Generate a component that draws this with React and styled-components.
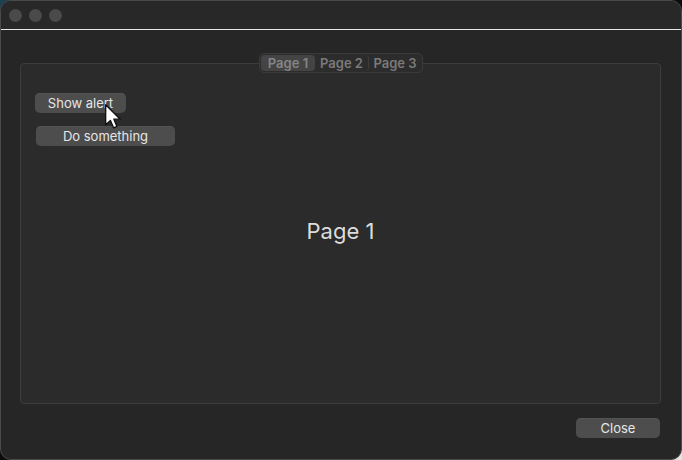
import React from "react";
import styled, { createGlobalStyle } from "styled-components";

const Global = createGlobalStyle`
  html, body { margin: 0; padding: 0; background: #101414; }
  body { font-family: Inter, "Noto Sans", sans-serif; -webkit-font-smoothing: antialiased; }
  #root { width: 682px; height: 460px; }
`;

const Desktop = styled.div`
  width: 682px;
  height: 460px;
  background: linear-gradient(135deg, #1d4250 0%, #0c0c0c 20%, #0c0c0c 80%, #e8e8e8 100%);
  overflow: hidden;
  position: relative;
`;

const Window = styled.div`
  width: 682px;
  height: 460px;
  box-sizing: border-box;
  border: 1px solid #4a4a4a;
  border-radius: 11px;
  background: #262626;
  display: flex;
  flex-direction: column;
  overflow: hidden;
`;

const TitleBar = styled.div`
  height: 28px;
  flex: none;
  background: #282828;
  border-bottom: 1px solid #e6e6e6;
  display: flex;
  align-items: center;
  gap: 8px;
  padding-left: 8px;
`;

const Light = styled.span`
  width: 13px;
  height: 13px;
  border-radius: 50%;
  background: #4a4a4a;
  margin-right: -1px;
`;

const Body = styled.div`
  flex: 1;
  display: flex;
  flex-direction: column;
  padding: 23px 20px 0 19px;
`;

const TabRow = styled.div`
  display: flex;
  justify-content: center;
  margin-bottom: -10px;
  position: relative;
  z-index: 1;
  padding-left: 1px;
`;

const Segmented = styled.div`
  display: flex;
  height: 20px;
  box-sizing: border-box;
  background: #2c2c2c;
  border: 1px solid #3b3b3b;
  border-radius: 5px;
  padding: 1px;
`;

const Segment = styled.div`
  width: ${(p) => p.$w}px;
  display: flex;
  align-items: center;
  justify-content: center;
  font-size: 13px;
  font-weight: 600;
  color: ${(p) => (p.$active ? "#858585" : "#7a7a7a")};
  background: ${(p) => (p.$active ? "#444444" : "transparent")};
  border-radius: 4px;
  border-right: ${(p) => (p.$divider ? "1px solid #3c3c3c" : "none")};
  box-sizing: border-box;
`;

const Group = styled.div`
  height: 341px;
  box-sizing: border-box;
  background: #2b2b2b;
  border: 1px solid #3d3d3d;
  border-radius: 4px;
  display: flex;
  flex-direction: column;
  align-items: flex-start;
  padding: 29px 14px;
  position: relative;
`;

const Button = styled.button`
  height: 20px;
  width: ${(p) => p.$w}px;
  margin-left: ${(p) => p.$ml || 0}px;
  margin-top: ${(p) => p.$mt || 0}px;
  border: none;
  border-radius: 5px;
  background: #4d4d4d;
  color: #e6e6e6;
  font-family: Inter, "Noto Sans", sans-serif;
  font-size: 13px;
  padding: 0;
  box-shadow: 0 0.5px 0 #5a5a5a inset;
`;

const Center = styled.div`
  position: absolute;
  inset: 0;
  display: flex;
  align-items: center;
  justify-content: center;
  font-size: 22px;
  color: #dcdcdc;
  pointer-events: none;
  padding-bottom: 6px;
`;

const Footer = styled.div`
  display: flex;
  justify-content: flex-end;
  padding-top: 14px;
  padding-right: 1px;
`;

const Cursor = styled.svg`
  position: absolute;
  left: 104px;
  top: 103px;
`;

export default function App() {
  return (
    <>
      <Global />
      <Desktop>
        <Window>
          <TitleBar>
            <Light />
            <Light />
            <Light />
          </TitleBar>
          <Body>
            <TabRow>
              <Segmented>
                <Segment $w={54} $active>Page 1</Segment>
                <Segment $w={54} $divider>Page 2</Segment>
                <Segment $w={52}>Page 3</Segment>
              </Segmented>
            </TabRow>
            <Group>
              <Button $w={91}>Show alert</Button>
              <Button $w={139} $ml={1} $mt={13}>Do something</Button>
              <Center>Page 1</Center>
            </Group>
            <Footer>
              <Button $w={84}>Close</Button>
            </Footer>
          </Body>
        </Window>
        <Cursor width="20" height="29" viewBox="0 0 18 26">
          <path
            d="M1.5 1.5 L1.5 19.5 L5.8 15.6 L8.6 22.3 L11.6 21 L8.9 14.5 L14.6 14.5 Z"
            fill="#ffffff"
            stroke="#111"
            strokeWidth="1.2"
            strokeLinejoin="round"
          />
        </Cursor>
      </Desktop>
    </>
  );
}
